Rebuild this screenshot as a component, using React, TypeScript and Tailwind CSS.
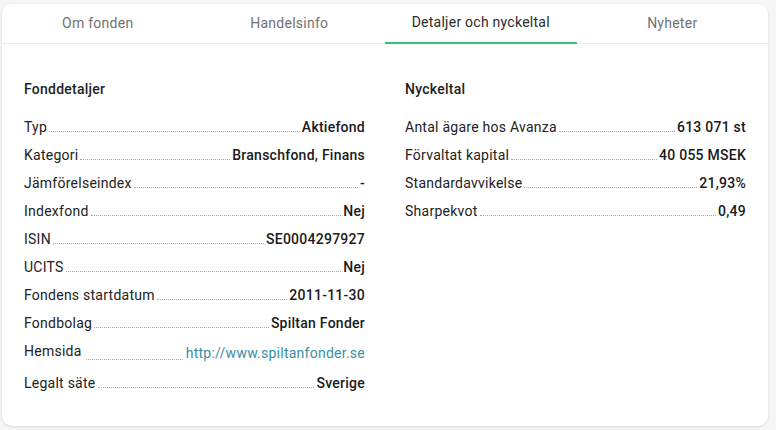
import React, { FC } from "react";

const tabs = ["Om fonden", "Handelsinfo", "Detaljer och nyckeltal", "Nyheter"];
const activeTab = 2;

type Row = { label: string; value: string; link?: boolean };

const fondDetaljer: Row[] = [
  { label: "Typ", value: "Aktiefond" },
  { label: "Kategori", value: "Branschfond, Finans" },
  { label: "Jämförelseindex", value: "-" },
  { label: "Indexfond", value: "Nej" },
  { label: "ISIN", value: "SE0004297927" },
  { label: "UCITS", value: "Nej" },
  { label: "Fondens startdatum", value: "2011-11-30" },
  { label: "Fondbolag", value: "Spiltan Fonder" },
  { label: "Hemsida", value: "http://www.spiltanfonder.se", link: true },
  { label: "Legalt säte", value: "Sverige" },
];

const nyckeltal: Row[] = [
  { label: "Antal ägare hos Avanza", value: "613 071 st" },
  { label: "Förvaltat kapital", value: "40 055 MSEK" },
  { label: "Standardavvikelse", value: "21,93%" },
  { label: "Sharpekvot", value: "0,49" },
];

const DetailRow: FC<{ row: Row }> = ({ row }) => {
  if (row.link) {
    // link row sits a bit lower and is taller than the others
    return (
      <div className="flex h-[32px] items-start pt-[4px]">
        <span className="leading-[20px] text-[#222]">{row.label}</span>
        <div className="flex-1 ml-[4px] mr-[3px] mt-[18px] border-b border-dotted border-[#aaa]" />
        <a className="mt-[2px] leading-[20px] text-[#3a8ea4]">{row.value}</a>
      </div>
    );
  }
  return (
    <div className="flex h-[28px] items-end pb-[4px]">
      <span className="leading-[20px] text-[#222]">{row.label}</span>
      <div className="flex-1 mx-[2px] mb-[5px] border-b border-dotted border-[#aaa]" />
      <span className="leading-[20px] font-medium text-[#1a1a1a]">{row.value}</span>
    </div>
  );
};

const Section: FC<{ title: string; rows: Row[] }> = ({ title, rows }) => (
  <div className="flex-1">
    <div className="leading-[20px] font-medium text-[#1e1e1e] mb-[14px]">{title}</div>
    {rows.map((r) => (
      <DetailRow key={r.label} row={r} />
    ))}
  </div>
);

const App: FC = () => {
  return (
    <div
      className="w-[776px] h-[430px] bg-[#f6f6f6] pt-[4px] pl-[2px] text-[14px] tracking-[0.25px]"
      style={{ fontFamily: "Roboto, 'Liberation Sans', sans-serif" }}
    >
      <div className="w-[766px] h-[422px] bg-white rounded-[10px] shadow-[0_1px_3px_rgba(0,0,0,0.12)]">
        <div className="flex">
          {tabs.map((t, i) => (
            <div
              key={t}
              className={
                i === activeTab
                  ? "flex-1 h-[40px] flex items-center justify-center border-b-2 border-[#34c17f] text-[#2b2b2b]"
                  : "flex-1 h-[40px] flex items-center justify-center border-b border-[#ececec] text-[#727272]"
              }
            >
              <span className="-mt-[1px]">{t}</span>
            </div>
          ))}
        </div>
        <div className="flex gap-[40px] px-[22px] pt-[35px]">
          <Section title="Fonddetaljer" rows={fondDetaljer} />
          <Section title="Nyckeltal" rows={nyckeltal} />
        </div>
      </div>
    </div>
  );
};

export default App;
